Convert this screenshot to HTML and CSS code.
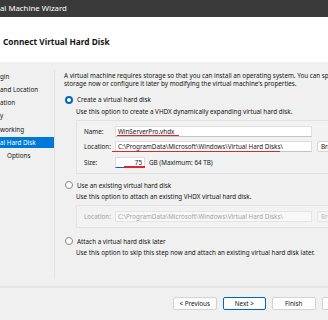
FILE: index.html
```html
<!DOCTYPE html>
<html lang="en">
<head>
    <meta charset="UTF-8">
    <title>New Virtual Machine Wizard</title>
    <link rel="stylesheet" href="styles.css">
</head>
<body>

    <div class="window">
        <div class="titlebar">al Machine Wizard</div>

        <div class="header">
            <h1>Connect Virtual Hard Disk</h1>
        </div>

        <div class="main">
            <!-- wizard steps, left edge cut off -->
            <ul class="steps">
                <li>gin</li>
                <li>and Location</li>
                <li>ation</li>
                <li>y</li>
                <li>working</li>
                <li class="current">al Hard Disk</li>
                <li class="indent">Options</li>
            </ul>

            <div class="content">
                <p class="intro">A virtual machine requires storage so that you can install an operating system. You can specify the<br>storage now or configure it later by modifying the virtual machine's properties.</p>

                <div class="option">
                    <div class="radio checked"><span class="dot"></span>Create a virtual hard disk</div>
                    <p class="hint">Use this option to create a VHDX dynamically expanding virtual hard disk.</p>
                    <div class="group">
                        <div class="field">
                            <span class="label">Name:</span>
                            <span class="input wide">WinServerPro.vhdx</span>
                            <span class="ink ink-name"></span>
                        </div>
                        <div class="field">
                            <span class="label">Location:</span>
                            <span class="input wide">C:\ProgramData\Microsoft\Windows\Virtual Hard Disks\</span>
                            <span class="btn browse">Browse...</span>
                            <span class="ink ink-loc"></span>
                        </div>
                        <div class="field">
                            <span class="label">Size:</span>
                            <span class="input size">75</span>
                            <span class="unit">GB (Maximum: 64 TB)</span>
                            <span class="ink ink-size"></span>
                        </div>
                    </div>
                </div>

                <div class="option">
                    <div class="radio"><span class="dot"></span>Use an existing virtual hard disk</div>
                    <p class="hint">Use this option to attach an existing VHDX virtual hard disk.</p>
                    <div class="group disabled">
                        <div class="field">
                            <span class="label">Location:</span>
                            <span class="input wide">C:\ProgramData\Microsoft\Windows\Virtual Hard Disks\</span>
                            <span class="btn browse">Browse...</span>
                        </div>
                    </div>
                </div>

                <div class="option last">
                    <div class="radio"><span class="dot"></span>Attach a virtual hard disk later</div>
                    <p class="hint">Use this option to skip this step now and attach an existing virtual hard disk later.</p>
                </div>
            </div>
        </div>

        <div class="footer">
            <span class="btn">&lt; Previous</span>
            <span class="btn default">Next &gt;</span>
            <span class="btn">Finish</span>
            <span class="btn">Cancel</span>
        </div>
    </div>

</body>
</html>
```

FILE: styles.css
```css
* { margin: 0; padding: 0; box-sizing: border-box; }

body {
    font-family: 'Noto Sans', 'Open Sans', sans-serif;
    font-size: 6.3px;
    color: #141414;
    background: #f0f0f0;
    width: 328px;
    height: 320px;
    overflow: hidden;
}

.window { width: 420px; }

.titlebar {
    height: 17px;
    line-height: 16px;
    background: #3a3a3a;
    color: #fff;
    font-size: 7.8px;
    white-space: nowrap;
}

.header { height: 45px; background: #fff; }
.header h1 {
    font-size: 8.3px;
    font-weight: 700;
    line-height: 11px;
    padding: 19px 0 0 3px;
}

.main { display: flex; height: 224px; }

/* --- left step list --- */
.steps {
    list-style: none;
    width: 55px;
    flex-shrink: 0;
    margin: 8px 0 7px;
    padding-top: 0.5px;
    border-right: 1px solid #e1e1e1;
}
.steps li {
    height: 11px;
    line-height: 11px;
    margin-bottom: 2.33px;
    white-space: nowrap;
    overflow: hidden;
}
.steps li.current { background: #0078d7; color: #fff; }
.steps li.indent { padding-left: 7px; }

/* --- page content --- */
.content { flex: 1; padding-left: 9px; white-space: nowrap; }
.intro { margin-top: 10px; line-height: 8px; }

.radio {
    display: flex;
    align-items: center;
    gap: 4px;
    height: 10px;
    margin-top: 6.5px;
    padding-left: 1px;
}
.option.last .radio { margin-top: 8px; }
.dot {
    width: 8px; height: 8px; border-radius: 50%;
    border: 1px solid #858585; background: #fff;
}
.radio.checked .dot { border: 2.5px solid #0067c0; }

.hint { margin: 3px 0 0 12px; line-height: 8px; }

.group {
    margin: 4px 0 0 12px;
    padding: 5px 0 5px 7px;
    border: 1px solid #e2e2e2;
    background: #f2f2f2;
    display: flex;
    flex-direction: column;
    gap: 4.5px;
}

.field { position: relative; display: flex; align-items: center; height: 11px; }
.label { width: 31px; flex-shrink: 0; }
.input {
    height: 11px;
    line-height: 9px;
    padding: 0 2px;
    border: 1px solid #dedede;
    border-bottom-color: #c4c4c4;
    background: #fff;
    overflow: hidden;
    flex-shrink: 0;
}
.input.wide { width: 197px; }
.input.size {
    width: 30px;
    text-align: right;
    border-bottom: 1.5px solid #0067c0;
}
.unit { margin-left: 4px; }

.btn {
    display: inline-block;
    border: 1px solid #d3d3d3;
    border-radius: 2px;
    background: #fdfdfd;
    flex-shrink: 0;
}
.browse {
    width: 44px;
    height: 11px;
    line-height: 9px;
    margin-left: 5px;
    padding-left: 3px;
}

.group.disabled { color: #a3a3a3; }
.group.disabled .input { background: #f8f8f8; border-color: #e4e4e4; }
.group.disabled .browse { background: #f6f6f6; border-color: #e4e4e4; color: #b8b8b8; }

/* red pen marks drawn over the screenshot */
.ink { position: absolute; height: 1.5px; background: #e3242b; }
.ink-name { left: 33px; top: 9px; width: 62px; }
.ink-loc { left: 28px; top: 9.5px; width: 168px; }
.ink-size { left: 40px; top: 9.5px; width: 21px; }

/* --- bottom buttons --- */
.footer {
    display: flex;
    gap: 6px;
    height: 34px;
    padding: 9px 0 0 173px;
    border-top: 2px solid #e6e6e6;
}
.footer .btn {
    width: 43.5px;
    height: 13px;
    line-height: 11px;
    text-align: center;
}
.footer .btn.default { border-color: #0067c0; }
```
